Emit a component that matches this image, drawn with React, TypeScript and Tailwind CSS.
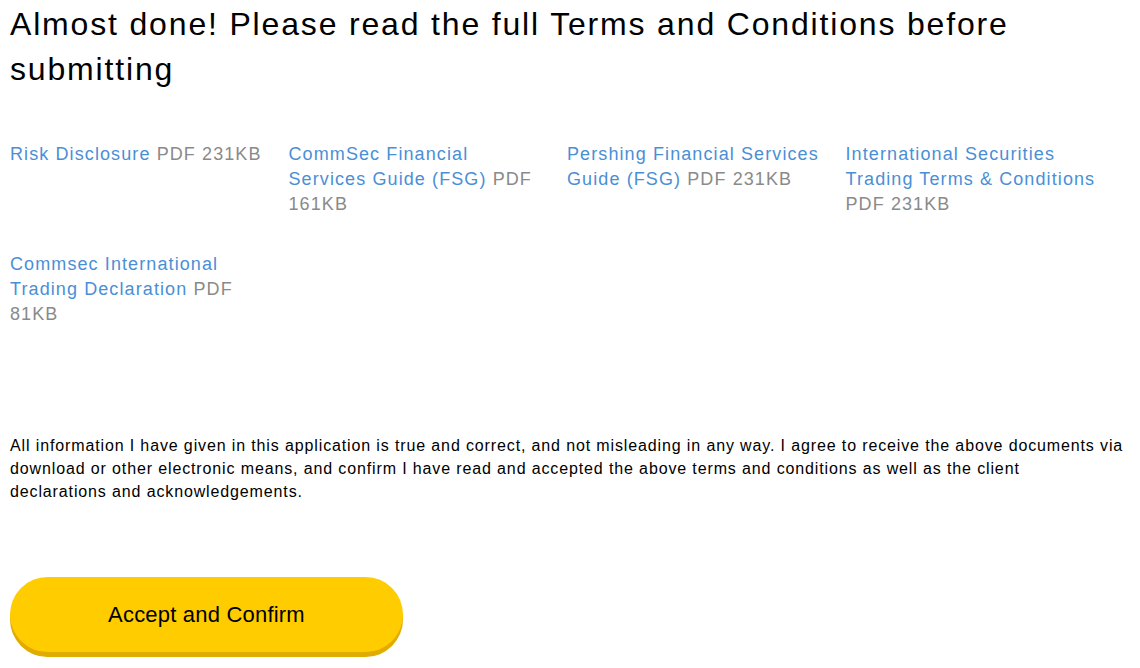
import React from "react";

interface Doc {
  title: string;
  meta: string;
}

const docs: Doc[] = [
  { title: "Risk Disclosure", meta: "PDF 231KB" },
  { title: "CommSec Financial Services Guide (FSG)", meta: "PDF 161KB" },
  { title: "Pershing Financial Services Guide (FSG)", meta: "PDF 231KB" },
  { title: "International Securities Trading Terms & Conditions", meta: "PDF 231KB" },
  { title: "Commsec International Trading Declaration", meta: "PDF 81KB" },
];

export default function App() {
  return (
    <div className="px-[10px] bg-white min-h-[668px] font-['Liberation_Sans',Arial,sans-serif] text-black">
      <h1 className="text-[32px] leading-[45px] pt-[2px] pr-[90px] tracking-[1.83px]">
        Almost done! Please read the full Terms and Conditions before submitting
      </h1>

      <div className="grid grid-cols-4 w-[1114px] mt-[50px] gap-y-[35px]">
        {docs.map((d) => (
          <div key={d.title} className="text-[18px] leading-[25px] pr-[24px] tracking-[1.1px]">
            <a href="#" className="text-[#4a8fd6]">
              {d.title}
            </a>{" "}
            <span className="text-[#8a8a8a]">{d.meta}</span>
          </div>
        ))}
      </div>

      <p className="text-[16px] leading-[23px] mt-[107px] tracking-[0.87px]">
        All information I have given in this application is true and correct, and not misleading in any way. I agree to
        receive the above documents via download or other electronic means, and confirm I have read and accepted the
        above terms and conditions as well as the client
        <br />
        declarations and acknowledgements.
      </p>

      <button className="mt-[74px] w-[393px] h-[75px] rounded-full bg-[#ffcc00] shadow-[0_5px_0_#e0ac00] text-[22px] tracking-[0.2px] text-black">
        Accept and Confirm
      </button>
    </div>
  );
}
